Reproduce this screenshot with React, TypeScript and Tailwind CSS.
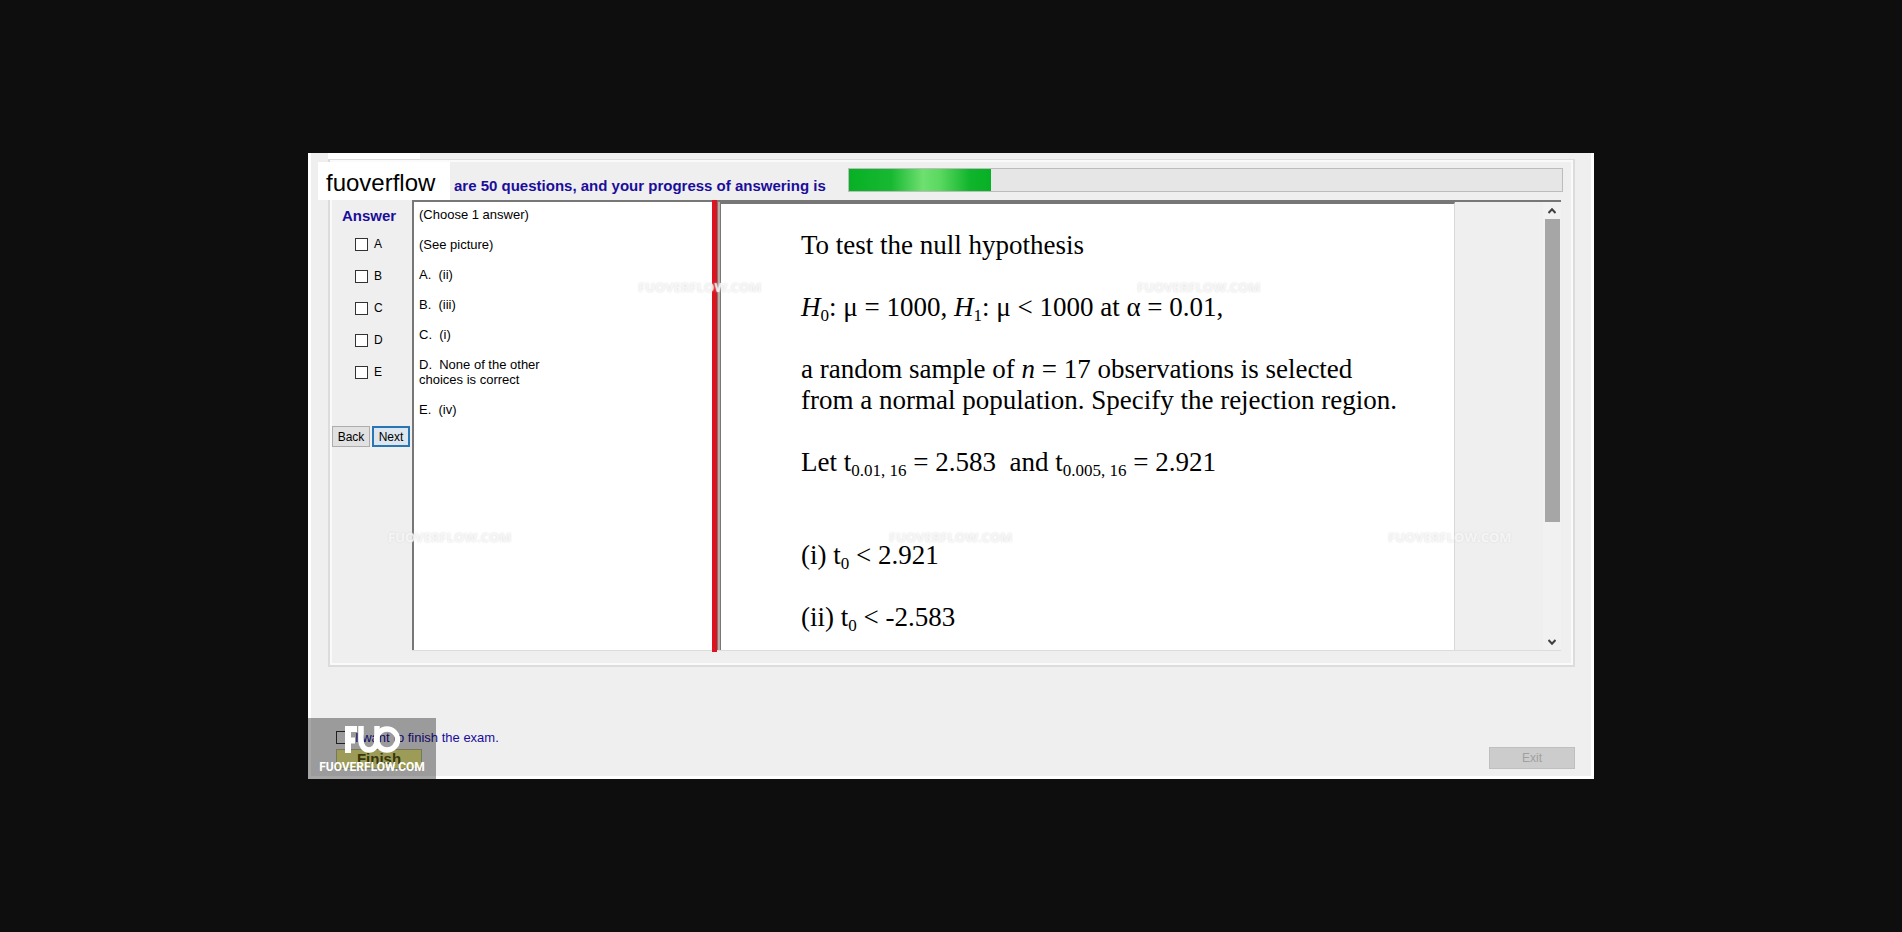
import React from "react";

const letters = ["A", "B", "C", "D", "E"];

const choices = ["A.\u00a0 (ii)", "B.\u00a0 (iii)", "C.\u00a0 (i)", "D.\u00a0 None of the other choices is correct", "E.\u00a0 (iv)"];

function Chevron({ up = false }: { up?: boolean }) {
  return (
    <svg viewBox="0 0 8 8" className="h-2 w-2" fill="none" stroke="#404040" strokeWidth="2">
      <path d={up ? "M0.5 6 L4 2.2 L7.5 6" : "M0.5 2 L4 5.8 L7.5 2"} />
    </svg>
  );
}

function Mark({ className }: { className: string }) {
  return (
    <span
      aria-hidden="true"
      className={`pointer-events-none absolute z-20 font-['Open_Sans',sans-serif] text-[13px] leading-4 font-bold text-white/70 [text-shadow:0_0_2px_#d8d8d8] ${className}`}
    >
      FUOVERFLOW.COM
    </span>
  );
}

function Badge() {
  return (
    <div className="absolute -bottom-[3px] -left-[3px] z-20 flex h-[61px] w-32 flex-col items-center bg-black/35 pt-2">
      <svg viewBox="0 0 56 27" className="h-[27px] w-14" fill="none" stroke="#ffffff" strokeWidth="5.5">
        <path d="M4 27 V3 H13 M4 14.5 H11" strokeWidth="6" />
        <path d="M17 0 V15 A8 9 0 0 0 33 15 V0" />
        <circle cx="43" cy="13.5" r="10.5" />
      </svg>
      <span className="pt-1.5 font-['Roboto',sans-serif] text-xs leading-4 font-bold text-white">FUOVERFLOW.COM</span>
    </div>
  );
}

function Sub({ children }: { children: React.ReactNode }) {
  return <sub className="bottom-[-5px] text-[17px] leading-none">{children}</sub>;
}

export default function App() {
  return (
    <div className="flex min-h-screen items-center justify-center bg-[#0e0e0e] font-['Liberation_Sans',sans-serif] text-[13px] text-black">
      <main className="relative w-full max-w-[1286px] border-x-3 border-b-3 border-white bg-[#efefef] pr-4 pl-[17px]">
        <div className="h-1.5 w-[92px] bg-white" />

        <section className="border-2 border-t border-[#dcdcdc] pr-3 pb-3.5 shadow-[inset_0_0_0_2px_#fafafa]">
          <header className="-mr-0.5 flex h-10 items-end">
            <div className="z-10 -ml-3 flex h-[38px] w-[132px] shrink-0 items-center bg-white pt-1 pl-2 text-2xl leading-none">
              fuoverflow
            </div>
            <label htmlFor="progress" className="ml-1 shrink-0 pb-1 text-[15px] leading-5 font-bold text-[#1b0d9b]">
              are 50 questions, and your progress of answering is
            </label>
            <div
              id="progress"
              role="progressbar"
              aria-valuenow={20}
              className="mb-2 ml-[22px] h-6 flex-1 border border-[#bcbcbc] bg-[#e6e6e6]"
            >
              <div className="h-full w-1/5 bg-[linear-gradient(90deg,#06b025,#18b932_30%,#6ee070_52%,#5bd860_64%,#10b52c_85%,#06b025)]" />
            </div>
          </header>

          <div className="flex h-[451px]">
            <aside className="flex w-[82px] shrink-0 flex-col">
              <h2 className="pt-2 pr-1 text-center text-[15px] leading-4 font-bold text-[#1b0d9b]">Answer</h2>
              <div className="flex flex-col pt-1 pl-[25px] text-xs">
                {letters.map((l) => (
                  <label key={l} className="flex h-8 items-center gap-1.5">
                    <input type="checkbox" className="h-[13px] w-[13px] appearance-none border border-[#333] bg-white" />
                    {l}
                  </label>
                ))}
              </div>
              <div className="mt-[38px] flex gap-0.5 pl-0.5 text-xs">
                <button className="h-[21px] w-[38px] border border-[#adadad] bg-[#e1e1e1]">Back</button>
                <button className="h-[21px] w-[38px] border-2 border-[#2a76b4] bg-[#dde6ee]">Next</button>
              </div>
            </aside>

            <div className="flex min-w-0 flex-1 border-t-2 border-b border-t-[#777] border-b-[#dcdcdc]">
              <div className="w-[300px] shrink-0 border-l-2 border-[#777] bg-white pt-[5px] pl-[5px] leading-[15px]">
                <div className="flex w-32 flex-col gap-[15px]">
                  <p>(Choose 1 answer)</p>
                  <p>(See picture)</p>
                  {choices.map((c) => (
                    <p key={c}>{c}</p>
                  ))}
                </div>
              </div>
              <div className="z-10 -my-0.5 w-[5px] shrink-0 bg-[#dc1420]" />
              <div className="w-1 shrink-0 border-x border-[#777] bg-[#b8b0a8]" />
              <article className="min-w-0 flex-1 overflow-hidden border-t-2 border-t-[#777] border-r border-r-[#d8d8d8] bg-white pt-[26px] pl-20 font-['Liberation_Serif',serif] text-[27px] leading-[31px]">
                <div className="flex max-w-[620px] flex-col gap-[31px]">
                  <p>To test the null hypothesis</p>
                  <p>
                    <i>H</i>
                    <Sub>0</Sub>: μ = 1000, <i>H</i>
                    <Sub>1</Sub>: μ &lt; 1000 at α = 0.01,
                  </p>
                  <p>
                    a random sample of <i>n</i> = 17 observations is selected
                    <br />
                    from a normal population. Specify the rejection region.
                  </p>
                  <p>
                    Let t<Sub>0.01, 16</Sub> = 2.583&nbsp; and t<Sub>0.005, 16</Sub> = 2.921
                  </p>
                  <p className="pt-[31px]">
                    (i) t<Sub>0</Sub> &lt; 2.921
                  </p>
                  <p>
                    (ii) t<Sub>0</Sub> &lt; -2.583
                  </p>
                </div>
              </article>
              <div className="w-[88px] shrink-0" />
              <div className="flex w-[18px] shrink-0 flex-col items-center bg-[#f1f1f1]">
                <div className="flex h-[17px] items-center">
                  <Chevron up />
                </div>
                <div className="h-[303px] w-[15px] bg-[#a6a6a6]" />
                <div className="mt-auto flex h-[17px] items-center">
                  <Chevron />
                </div>
              </div>
            </div>
          </div>
        </section>

        <footer className="flex h-[109px] items-end justify-between pb-[7px]">
          <div className="flex flex-col items-start gap-0.5 pl-2">
            <label className="flex items-center gap-1.5 text-[#1b0d9b]">
              <input type="checkbox" className="h-[13px] w-[13px] appearance-none border border-[#333]" />
              I want to finish the exam.
            </label>
            <button className="h-5 w-[86px] border border-[#b8b888] bg-[#f0f088] text-[15px] leading-4 font-bold text-[#555510]">
              Finish
            </button>
          </div>
          <button disabled className="h-[22px] w-[86px] border border-[#bfbfbf] bg-[#cccccc] text-xs text-[#a0a0a0]">
            Exit
          </button>
        </footer>

        <Badge />
        <Mark className="top-[126px] left-[327px]" />
        <Mark className="top-[126px] left-[826px]" />
        <Mark className="top-[376px] left-[77px]" />
        <Mark className="top-[376px] left-[578px]" />
        <Mark className="top-[376px] left-[1077px]" />
      </main>
    </div>
  );
}
